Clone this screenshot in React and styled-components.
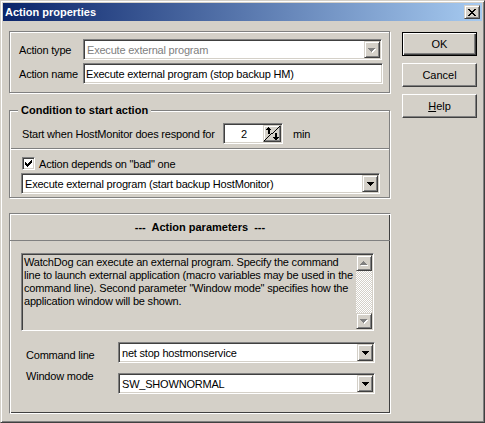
import React from 'react'
import styled, { createGlobalStyle, css } from 'styled-components'

const GlobalStyle = createGlobalStyle`
  html, body {
    margin: 0;
    padding: 0;
    background: #D4D0C8;
    overflow: hidden;
  }
  body {
    font-family: "Liberation Sans", Arial, sans-serif;
    font-size: 11px;
    color: #000;
  }
`

// win2000 bevels
const sunken = css`
  border: 1px solid;
  border-color: #808080 #fff #fff #808080;
  box-shadow: inset 1px 1px #404040, inset -1px -1px #D4D0C8;
`
const raisedSmall = css`
  background: #D4D0C8;
  border: 1px solid;
  border-color: #D4D0C8 #404040 #404040 #D4D0C8;
  box-shadow: inset 1px 1px #fff, inset -1px -1px #808080;
`
const etched = css`
  border: 1px solid #808080;
  box-shadow: inset 1px 1px #fff, 1px 1px #fff;
`

// pixel glyphs
const DOWN = ['xxxxxxx', '.xxxxx.', '..xxx..', '...x...']
const UP = [...DOWN].reverse()
const CLOSE = [
  'xx....xx',
  '.xx..xx.',
  '..xxxx..',
  '...xx...',
  '..xxxx..',
  '.xx..xx.',
  'xx....xx',
]
const CHECK = [
  '......x',
  '.....xx',
  'x...xxx',
  'xx.xxx.',
  'xxxxx..',
  '.xxx...',
  '..x....',
]
const SPIN = (() => {
  const w = 16, h = 15
  const g = Array.from({ length: h }, () => Array(w).fill('.'))
  const set = (x, y) => { if (x >= 0 && x < w && y >= 0 && y < h) g[y][x] = 'x' }
  for (let x = 0; x < w; x++) set(x, Math.round(14 - (x * 14) / 15))
  set(4, 1)
  for (let x = 3; x <= 5; x++) set(x, 2)
  for (let x = 2; x <= 6; x++) set(x, 3)
  for (let y = 4; y <= 7; y++) { set(4, y); set(5, y) }
  for (let y = 7; y <= 10; y++) { set(11, y); set(12, y) }
  for (let x = 9; x <= 14; x++) set(x, 11)
  for (let x = 10; x <= 13; x++) set(x, 12)
  set(11, 13); set(12, 13)
  return g.map(r => r.join(''))
})()

function Pixels({ rows, color = '#000', shadow }) {
  const pts = []
  rows.forEach((r, y) => [...r].forEach((c, x) => { if (c === 'x') pts.push([x, y]) }))
  const extra = shadow ? 1 : 0
  return (
    <svg width={rows[0].length + extra} height={rows.length + extra} shapeRendering="crispEdges" style={{ display: 'block' }}>
      {shadow && pts.map(([x, y]) => <rect key={'s' + x + '-' + y} x={x + 1} y={y + 1} width="1" height="1" fill={shadow} />)}
      {pts.map(([x, y]) => <rect key={x + '-' + y} x={x} y={y} width="1" height="1" fill={color} />)}
    </svg>
  )
}

const Window = styled.div`
  width: 485px;
  height: 423px;
  box-sizing: border-box;
  border: 1px solid;
  border-color: #D4D0C8 #404040 #404040 #D4D0C8;
  box-shadow: inset 1px 1px #fff, inset -1px -1px #808080;
  padding: 2px;
  background: #D4D0C8;
  display: flex;
  flex-direction: column;
  letter-spacing: -0.2px;
`

const TitleBar = styled.div`
  flex: none;
  height: 18px;
  margin-bottom: 1px;
  padding-left: 2px;
  display: flex;
  align-items: center;
  background: linear-gradient(to right, #0A246A, #A6CAF0);
`

const Title = styled.span`
  color: #fff;
  font-weight: bold;
  letter-spacing: 0;
`

const CloseButton = styled.div`
  margin-left: auto;
  margin-right: 2px;
  width: 16px;
  height: 14px;
  box-sizing: border-box;
  display: flex;
  align-items: center;
  justify-content: center;
  ${raisedSmall}
`

const Body = styled.div`
  display: flex;
  padding: 9px 0 0 6px;
`

const LeftColumn = styled.div`
  width: 382px;
  display: flex;
  flex-direction: column;
`

const ButtonColumn = styled.div`
  margin-left: 11px;
  padding-top: 1px;
  display: flex;
  flex-direction: column;
  gap: 7px;
`

const PushButton = styled.button`
  width: 75px;
  height: 24px;
  box-sizing: border-box;
  margin: 0;
  padding: 0;
  background: #D4D0C8;
  font: inherit;
  color: #000;
  display: flex;
  align-items: center;
  justify-content: center;
  ${p => p.$default
    ? css`
      border: 1px solid #000;
      box-shadow: inset 1px 1px #fff, inset -1px -1px #404040, inset -2px -2px #808080;
    `
    : css`
      border: 1px solid;
      border-color: #fff #404040 #404040 #fff;
      box-shadow: inset -1px -1px #808080;
    `}
  u { text-decoration: underline; }
`

const TopFrame = styled.div`
  width: 381px;
  height: 62px;
  box-sizing: border-box;
  ${etched}
  padding: 7px 0 0 9px;
  display: flex;
  flex-direction: column;
  gap: 3px;
`

const FieldRow = styled.div`
  display: flex;
  align-items: center;
`

const FieldLabel = styled.span`
  width: ${p => p.$width}px;
  flex: none;
  white-space: nowrap;
`

const Combo = styled.div`
  width: ${p => p.$width}px;
  height: 21px;
  box-sizing: border-box;
  padding: 1px;
  background: #fff;
  ${sunken}
  display: flex;
  align-items: center;
  flex: none;
`

const ComboText = styled.span`
  flex: 1;
  padding-left: 2px;
  white-space: nowrap;
  overflow: hidden;
  color: ${p => (p.$disabled ? '#808080' : '#000')};
`

const DropButton = styled.div`
  width: 16px;
  height: 17px;
  box-sizing: border-box;
  flex: none;
  ${raisedSmall}
  display: flex;
  align-items: center;
  justify-content: center;
  padding-top: 1px;
`

const Edit = styled.div`
  width: ${p => p.$width}px;
  height: 21px;
  box-sizing: border-box;
  padding: 0 2px;
  background: #fff;
  ${sunken}
  display: flex;
  align-items: center;
  white-space: nowrap;
`

function ComboBox({ width, text, disabled }) {
  return (
    <Combo $width={width}>
      <ComboText $disabled={disabled}>{text}</ComboText>
      <DropButton>
        {disabled ? <Pixels rows={DOWN} color="#808080" shadow="#fff" /> : <Pixels rows={DOWN} />}
      </DropButton>
    </Combo>
  )
}

const GroupBox = styled.fieldset`
  margin: 11px 0 0;
  padding: 0;
  min-inline-size: 0;
  width: 381px;
  box-sizing: border-box;
  ${etched}
`

const Legend = styled.legend`
  margin-left: 8px;
  padding: 0 3px;
  line-height: 13px;
  font-weight: bold;
  letter-spacing: 0;
  background: #D4D0C8;
`

const GroupContent = styled.div`
  padding: 6px 0 3px 12px;
  display: flex;
  flex-direction: column;
`

const SpinRow = styled.div`
  height: 21px;
  display: flex;
  align-items: center;
`

const SpinEdit = styled.div`
  width: 60px;
  height: 21px;
  box-sizing: border-box;
  padding: 1px;
  background: #fff;
  ${sunken}
  display: flex;
  align-items: center;
`

const SpinValue = styled.span`
  flex: 1;
  text-align: center;
`

const SpinButton = styled.div`
  width: 18px;
  height: 17px;
  box-sizing: border-box;
  ${raisedSmall}
  display: flex;
  align-items: center;
  justify-content: center;
`

const Unit = styled.span`
  margin-left: 10px;
`

const Separator = styled.div`
  margin: 4px 0 0 -11px;
  width: 378px;
  border-top: 1px solid #808080;
  border-bottom: 1px solid #fff;
`

const CheckRow = styled.div`
  margin-top: 7px;
  height: 13px;
  display: flex;
  align-items: center;
`

const CheckBox = styled.div`
  width: 13px;
  height: 13px;
  box-sizing: border-box;
  background: #fff;
  ${sunken}
  padding: 2px 0 0 2px;
`

const CheckLabel = styled.span`
  margin-left: 4px;
`

const ComboSlot = styled.div`
  margin: 3px 0 0 -1px;
`

const ParamsPanel = styled.div`
  margin-top: 15px;
  width: 382px;
  height: 201px;
  box-sizing: border-box;
  border: 1px solid;
  border-color: #808080 #fff #fff #808080;
  box-shadow: inset 1px 1px #fff, inset -1px -1px #404040;
  display: flex;
  flex-direction: column;
`

const ParamsHeader = styled.div`
  height: 26px;
  border-bottom: 1px solid #808080;
  display: flex;
  align-items: center;
  justify-content: center;
  font-weight: bold;
  letter-spacing: 0;
  white-space: pre;
`

const ParamsBody = styled.div`
  padding: 12px 0 0 11px;
  display: flex;
  flex-direction: column;
`

const Memo = styled.div`
  width: 353px;
  height: 78px;
  box-sizing: border-box;
  padding: 1px;
  background: #D4D0C8;
  ${sunken}
  display: flex;
`

const MemoText = styled.div`
  flex: 1;
  padding: 1px 0 0 1px;
  line-height: 13px;
  white-space: nowrap;
  overflow: hidden;
`

const ScrollBar = styled.div`
  width: 16px;
  display: flex;
  flex-direction: column;
`

const ScrollButton = styled.div`
  width: 16px;
  height: 16px;
  box-sizing: border-box;
  ${raisedSmall}
  display: flex;
  align-items: center;
  justify-content: center;
`

const ScrollTrack = styled.div`
  flex: 1;
  background: repeating-conic-gradient(#fff 0 25%, #D4D0C8 0 50%) 0 0 / 2px 2px;
`

const ParamRow = styled.div`
  margin-top: ${p => p.$gap}px;
  display: flex;
  align-items: flex-start;
`

const ParamLabel = styled.span`
  width: 92px;
  margin-left: 5px;
  margin-top: ${p => p.$offset}px;
  line-height: 13px;
  flex: none;
`

export default function App() {
  return (
    <>
      <GlobalStyle />
      <Window>
        <TitleBar>
          <Title>Action properties</Title>
          <CloseButton><Pixels rows={CLOSE} /></CloseButton>
        </TitleBar>
        <Body>
          <LeftColumn>
            <TopFrame>
              <FieldRow>
                <FieldLabel $width={64}>Action type</FieldLabel>
                <ComboBox width={299} text="Execute external program" disabled />
              </FieldRow>
              <FieldRow>
                <FieldLabel $width={64}>Action name</FieldLabel>
                <Edit $width={300}>Execute external program (stop backup HM)</Edit>
              </FieldRow>
            </TopFrame>

            <GroupBox>
              <Legend>Condition to start action</Legend>
              <GroupContent>
                <SpinRow>
                  <FieldLabel $width={201}>Start when HostMonitor does respond for</FieldLabel>
                  <SpinEdit>
                    <SpinValue>2</SpinValue>
                    <SpinButton><Pixels rows={SPIN} /></SpinButton>
                  </SpinEdit>
                  <Unit>min</Unit>
                </SpinRow>
                <Separator />
                <CheckRow>
                  <CheckBox><Pixels rows={CHECK} /></CheckBox>
                  <CheckLabel>Action depends on "bad" one</CheckLabel>
                </CheckRow>
                <ComboSlot>
                  <ComboBox width={359} text="Execute external program (start backup HostMonitor)" />
                </ComboSlot>
              </GroupContent>
            </GroupBox>

            <ParamsPanel>
              <ParamsHeader>{'---  Action parameters  ---'}</ParamsHeader>
              <ParamsBody>
                <Memo>
                  <MemoText>
                    WatchDog can execute an external program. Specify the command<br />
                    line to launch external application (macro variables may be used in the<br />
                    command line). Second parameter "Window mode" specifies how the<br />
                    application window will be shown.
                  </MemoText>
                  <ScrollBar>
                    <ScrollButton><Pixels rows={UP} color="#808080" shadow="#fff" /></ScrollButton>
                    <ScrollTrack />
                    <ScrollButton><Pixels rows={DOWN} color="#808080" shadow="#fff" /></ScrollButton>
                  </ScrollBar>
                </Memo>
                <ParamRow $gap={11}>
                  <ParamLabel $offset={7}>Command line</ParamLabel>
                  <ComboBox width={257} text="net stop hostmonservice" />
                </ParamRow>
                <ParamRow $gap={10}>
                  <ParamLabel $offset={-3}>Window mode</ParamLabel>
                  <ComboBox width={257} text="SW_SHOWNORMAL" />
                </ParamRow>
              </ParamsBody>
            </ParamsPanel>
          </LeftColumn>

          <ButtonColumn>
            <PushButton $default>OK</PushButton>
            <PushButton>Cancel</PushButton>
            <PushButton><span><u>H</u>elp</span></PushButton>
          </ButtonColumn>
        </Body>
      </Window>
    </>
  )
}
